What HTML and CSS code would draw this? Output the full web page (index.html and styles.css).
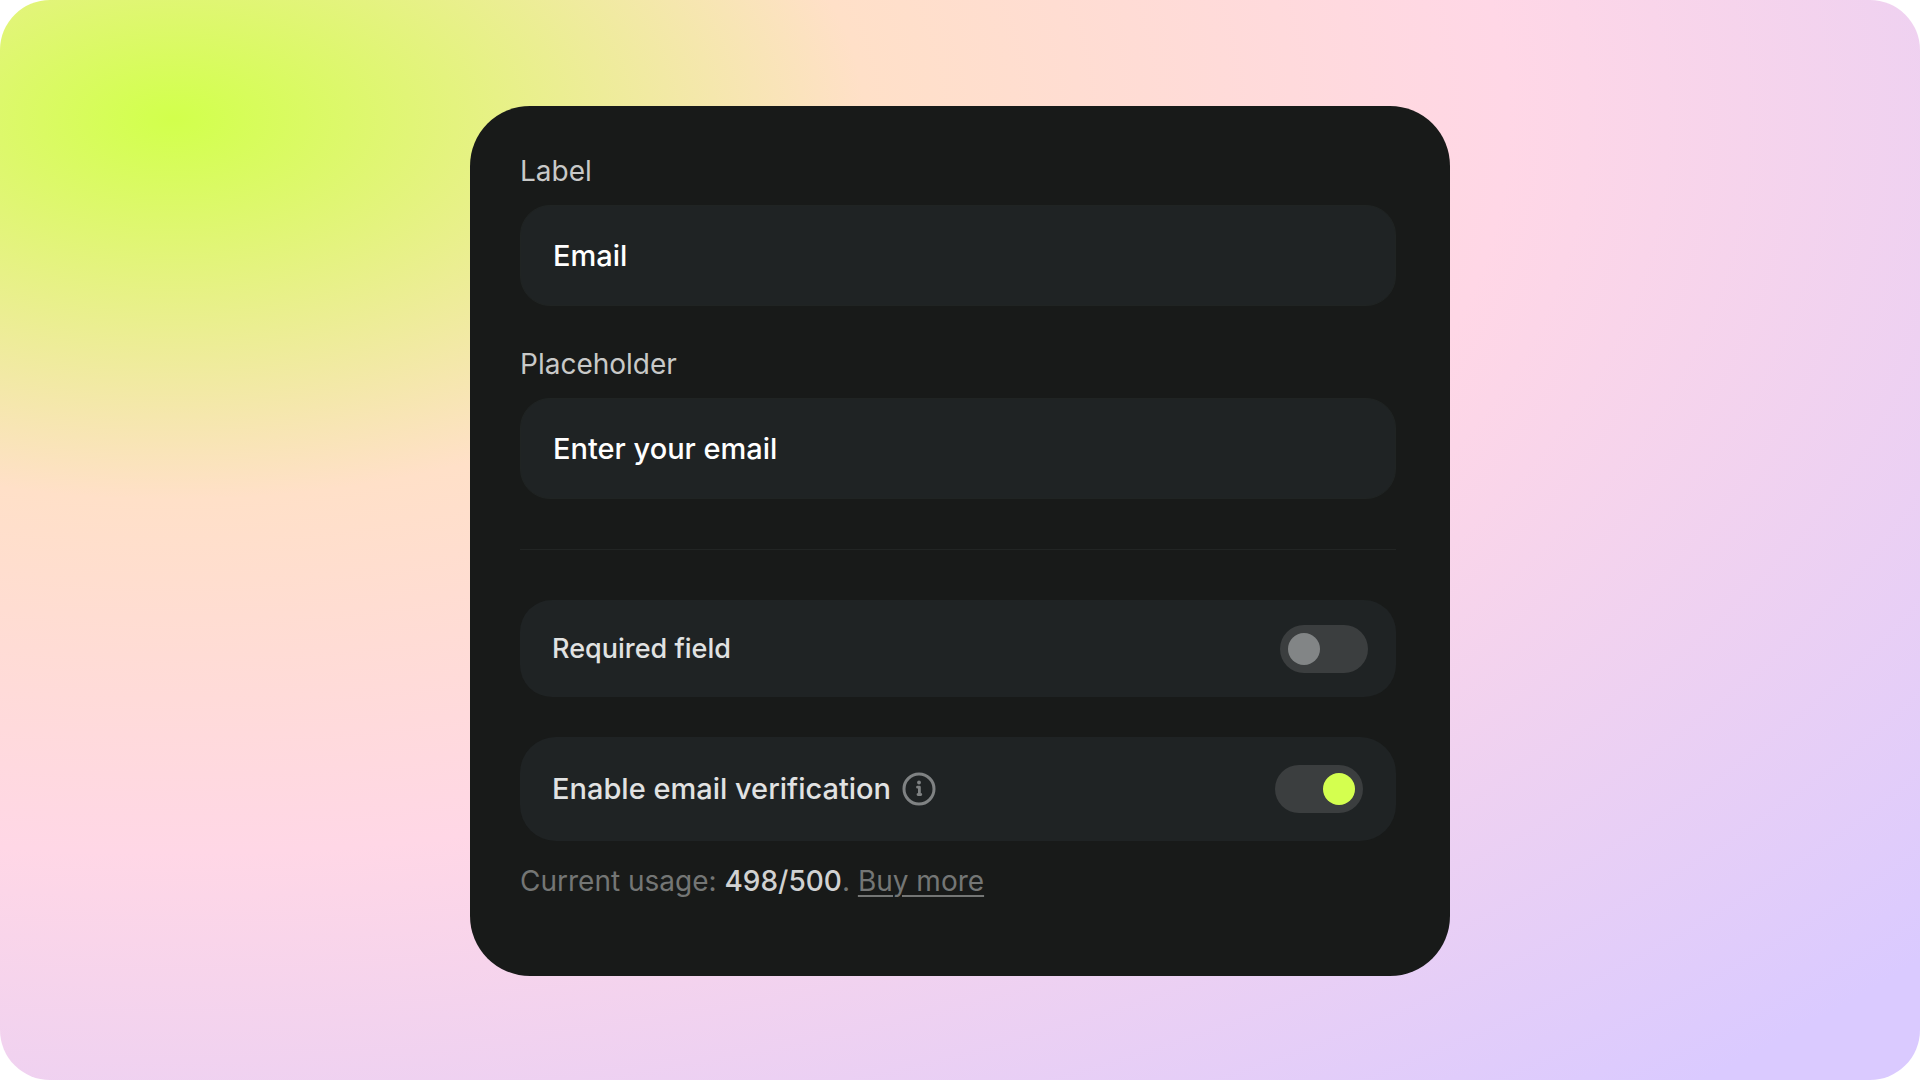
FILE: index.html
```html
<!DOCTYPE html>
<html lang="en">
<head>
  <meta charset="utf-8">
  <meta name="viewport" content="width=device-width, initial-scale=1">
  <title>Email field settings</title>
  <link rel="stylesheet" href="styles.css">
</head>
<body>
  <main class="stage">
    <form class="card">
      <div class="field">
        <label class="field-label" for="label">Label</label>
        <input class="field-input" id="label" type="text" value="Email">
      </div>
      <div class="field">
        <label class="field-label" for="placeholder">Placeholder</label>
        <input class="field-input" id="placeholder" type="text" value="Enter your email">
      </div>
      <hr class="divider">
      <div class="option">
        <label class="option-label" for="required">Required field</label>
        <input class="toggle" id="required" type="checkbox" role="switch">
      </div>
      <div class="option option-large">
        <label class="option-label" for="verify">Enable email verification</label>
        <svg class="info" viewBox="0 0 34 34" fill="none" stroke="currentColor" aria-hidden="true">
          <circle cx="17" cy="17" r="15" stroke-width="3"/>
          <circle cx="17" cy="10.500" r="1.900" fill="currentColor" stroke="none"/>
          <path d="M15.500 15.200H17.400V22.500M16 22.500H18.800" stroke-width="2.800" stroke-linecap="round" stroke-linejoin="round"/>
        </svg>
        <input class="toggle" id="verify" type="checkbox" role="switch" checked>
      </div>
      <p class="usage">Current usage: <strong class="usage-count">498/500</strong>. <a class="usage-link" href="#">Buy more</a></p>
    </form>
  </main>
</body>
</html>
```
FILE: styles.css
```css
* {
  box-sizing: border-box;
}

body {
  margin: 0;
  background: #ffffff;
  font-family: Inter, "Liberation Sans", sans-serif;
}

.stage {
  display: flex;
  align-items: center;
  justify-content: center;
  min-height: 100vh;
  padding-top: 2px;
  border-radius: 50px;
  background: radial-gradient(ellipse farthest-corner at 9% 11%, #d2ff4c 0%, #d3ff50 1%, #ffe0c8 28%, #ffd7e6 54%, #dacaff 94%);
}

.card {
  width: 100%;
  max-width: 980px;
  padding: 48px 54px 78px 50px;
  border-radius: 60px;
  background: #181a19;
}

.field {
  display: flex;
  flex-direction: column;
  gap: 17px;
}

.field + .field {
  margin-top: 41px;
}

.field-label {
  color: #c8c9c8;
  font-size: 28px;
  line-height: 34px;
}

.field-input {
  width: 100%;
  height: 101px;
  padding: 0 32px;
  border: 1px solid #202423;
  border-radius: 30px;
  outline: 0;
  background: #1f2324;
  color: #ffffff;
  font: 500 29px/36px Inter, "Liberation Sans", sans-serif;
}

.divider {
  height: 1px;
  margin: 50px 0;
  border: 0;
  background: #222524;
}

.option {
  display: flex;
  align-items: center;
  gap: 11px;
  min-height: 97px;
  padding: 0 28px 0 32px;
  border-radius: 32px;
  background: #1f2324;
}

.option-large {
  min-height: 104px;
  margin-top: 40px;
  padding-right: 33px;
  border-radius: 36px;
}

.option-label {
  color: #e1e2e2;
  font-size: 27px;
  font-weight: 500;
  line-height: 36px;
}

.option-large .option-label {
  font-size: 29px;
}

.info {
  width: 34px;
  height: 34px;
  color: #7f8283;
}

.toggle {
  display: flex;
  align-items: center;
  width: 88px;
  height: 48px;
  margin: 0 0 0 auto;
  padding: 0 8px;
  border-radius: 24px;
  background: #3b3e3f;
  appearance: none;
}

.toggle::before {
  width: 32px;
  height: 32px;
  border-radius: 50%;
  background: #828586;
  content: "";
}

.toggle:checked {
  justify-content: flex-end;
}

.toggle:checked::before {
  background: #d4ff4f;
}

.usage {
  margin: 23px 0 0;
  color: #747675;
  font-size: 28px;
  line-height: 34px;
}

.usage-count {
  color: #d1d2d2;
  font-weight: 500;
}

.usage-link {
  color: inherit;
  text-decoration-thickness: 2px;
  text-underline-offset: 4px;
}
```
